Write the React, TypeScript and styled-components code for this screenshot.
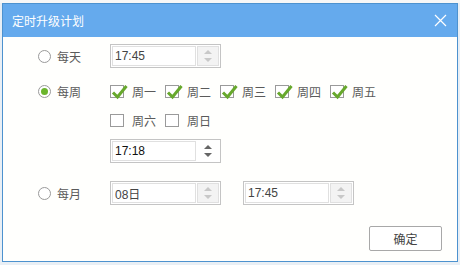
import React from 'react'
import styled, { createGlobalStyle } from 'styled-components'

const GlobalStyle = createGlobalStyle`
  html, body {
    margin: 0;
    padding: 0;
    background: #eef2f6;
  }
  body {
    font-family: "Liberation Sans", "Noto Sans CJK SC", sans-serif;
    font-size: 12px;
  }
`

const Page = styled.div`
  width: 460px;
  height: 265px;
  padding: 3px 0 0 2px;
  box-sizing: border-box;
  background: linear-gradient(#f7f7f7 0 3px, #e9eff5 3px);
`

const Dialog = styled.div`
  width: 456px;
  height: 259px;
  box-sizing: border-box;
  border: 1px solid #4d92cf;
  background: #fffffd;
  display: flex;
  flex-direction: column;
`

const Header = styled.div`
  height: 33px;
  flex: none;
  background: #65aaed;
  display: flex;
  align-items: center;
  justify-content: space-between;
  padding: 0 10px 0 9px;
`

const Title = styled.span`
  color: #ffffff;
  font-size: 12px;
  font-family: "Noto Sans CJK SC", sans-serif;
`

const Body = styled.div`
  flex: 1;
  display: flex;
  flex-direction: column;
  padding: 7px 15px 0 35px;
`

const Row = styled.div<{ $top?: number }>`
  display: grid;
  grid-template-columns: 72px auto;
  align-items: start;
  margin-top: ${({ $top }) => $top ?? 0}px;
`

const OptionLabel = styled.label<{ $h: number }>`
  display: flex;
  align-items: center;
  gap: 6px;
  height: ${({ $h }) => $h}px;
  color: #5a5a5a;
  font-family: "Noto Sans CJK SC", sans-serif;
  font-size: 12px;
`

const Radio = styled.span<{ $on?: boolean }>`
  width: 13px;
  height: 13px;
  box-sizing: border-box;
  border: 1px solid #9a9a9a;
  border-radius: 50%;
  background: #fff;
  display: flex;
  align-items: center;
  justify-content: center;
  &::after {
    content: '';
    display: ${({ $on }) => ($on ? 'block' : 'none')};
    width: 7px;
    height: 7px;
    border-radius: 50%;
    background: #6bb52c;
  }
`

const Stack = styled.div`
  display: flex;
  flex-direction: column;
  gap: 9px;
`

const DayLine = styled.div`
  display: flex;
  height: 20px;
  align-items: center;
`

const DayItem = styled.label`
  width: 55px;
  display: flex;
  align-items: center;
  gap: 8px;
  color: #5a5a5a;
  font-family: "Noto Sans CJK SC", sans-serif;
  font-size: 12px;
`

const Box = styled.span`
  position: relative;
  width: 14px;
  height: 13px;
  box-sizing: border-box;
  border: 1px solid #9a9a9a;
  background: #fff;
`

const Tick = styled.svg`
  position: absolute;
  left: 0;
  top: -1px;
  overflow: visible;
`

const Inputs = styled.div`
  display: flex;
  gap: 22px;
`

const Spin = styled.div`
  width: 111px;
  height: 24px;
  box-sizing: border-box;
  border: 1px solid #c4c4c4;
  display: flex;
  padding: 1px;
  gap: 1px;
  background: #fff;
`

const Field = styled.div<{ $dark?: boolean }>`
  flex: 1;
  box-sizing: border-box;
  border: 1px solid #e0e0e0;
  display: flex;
  align-items: center;
  padding-left: 2px;
  color: ${({ $dark }) => ($dark ? '#111' : '#444')};
  font-size: 12px;
  font-family: "Liberation Sans", "Noto Sans CJK SC", sans-serif;
`

const Arrows = styled.div<{ $active?: boolean }>`
  width: 22px;
  box-sizing: border-box;
  border: 1px solid ${({ $active }) => ($active ? '#fff' : '#e0e0e0')};
  background: ${({ $active }) => ($active ? '#fff' : '#f3f3f3')};
  display: flex;
  flex-direction: column;
  align-items: center;
  justify-content: center;
  gap: 4px;
`

const Tri = styled.span<{ $down?: boolean; $active?: boolean }>`
  width: 0;
  height: 0;
  border-left: 4px solid transparent;
  border-right: 4px solid transparent;
  ${({ $down, $active }) =>
    $down
      ? `border-top: 4px solid ${$active ? '#666' : '#c8c8c8'};`
      : `border-bottom: 4px solid ${$active ? '#666' : '#c8c8c8'};`}
`

const Footer = styled.div`
  display: flex;
  justify-content: flex-end;
  padding-top: 21px;
`

const Button = styled.button`
  width: 73px;
  height: 25px;
  border: 1px solid #a8a8a8;
  border-radius: 2px;
  background: #fff;
  color: #444;
  font-family: "Noto Sans CJK SC", sans-serif;
  font-size: 12px;
  padding: 0;
`

const Check = ({ on, label }: { on?: boolean; label: string }) => (
  <DayItem>
    <Box>
      {on && (
        <Tick width="16" height="14" viewBox="0 0 16 14">
          <path d="M2 7.5 L6.5 12 L15.5 1" fill="none" stroke="#67a82c" strokeWidth="3" strokeLinejoin="miter" />
        </Tick>
      )}
    </Box>
    {label}
  </DayItem>
)

const SpinInput = ({ value, active }: { value: string; active?: boolean }) => (
  <Spin>
    <Field $dark={active}>{value}</Field>
    <Arrows $active={active}>
      <Tri $active={active} />
      <Tri $down $active={active} />
    </Arrows>
  </Spin>
)

const CloseIcon = () => (
  <svg width="13" height="13" viewBox="0 0 13 13">
    <path d="M1 1 L12 12 M12 1 L1 12" stroke="#fff" strokeWidth="1.2" />
  </svg>
)

export default function App() {
  return (
    <Page>
      <GlobalStyle />
      <Dialog>
        <Header>
          <Title>定时升级计划</Title>
          <CloseIcon />
        </Header>
        <Body>
          <Row>
            <OptionLabel $h={24}>
              <Radio />
              每天
            </OptionLabel>
            <SpinInput value="17:45" />
          </Row>
          <Row $top={13}>
            <OptionLabel $h={20}>
              <Radio $on />
              每周
            </OptionLabel>
            <Stack>
              <DayLine>
                <Check on label="周一" />
                <Check on label="周二" />
                <Check on label="周三" />
                <Check on label="周四" />
                <Check on label="周五" />
              </DayLine>
              <DayLine>
                <Check label="周六" />
                <Check label="周日" />
              </DayLine>
              <SpinInput value="17:18" active />
            </Stack>
          </Row>
          <Row $top={18}>
            <OptionLabel $h={24}>
              <Radio />
              每月
            </OptionLabel>
            <Inputs>
              <SpinInput value="08日" />
              <SpinInput value="17:45" />
            </Inputs>
          </Row>
          <Footer>
            <Button>确定</Button>
          </Footer>
        </Body>
      </Dialog>
    </Page>
  )
}
